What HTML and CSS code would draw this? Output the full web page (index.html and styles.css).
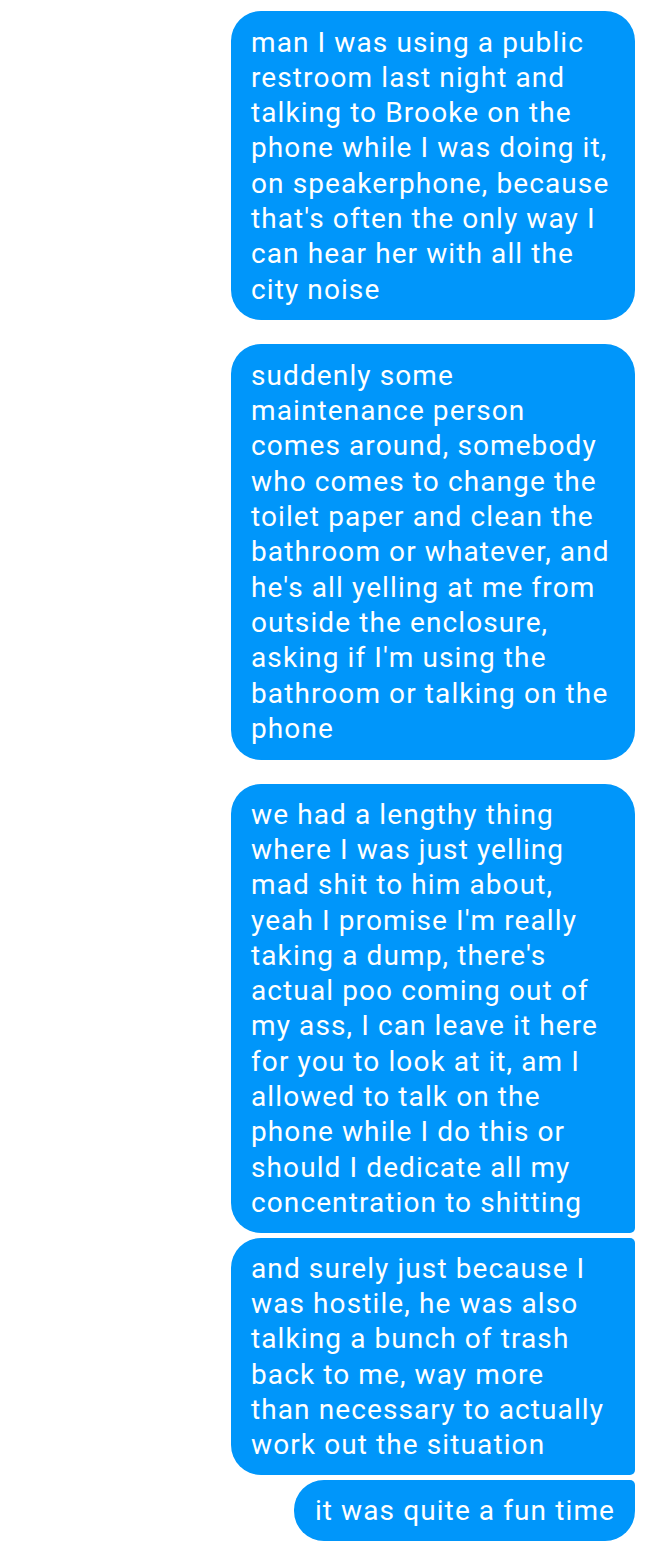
FILE: index.html
```html
<!DOCTYPE html>
<html>
<head>
<meta charset="utf-8">
<link rel="stylesheet" href="styles.css">
</head>
<body>
<div class="thread">
  <div class="bubble solo">man I was using a public<br>restroom last night and<br>talking to Brooke on the<br>phone while I was doing it,<br>on speakerphone, because<br>that's often the only way I<br>can hear her with all the<br>city noise</div>
  <div class="bubble solo">suddenly some<br>maintenance person<br>comes around, somebody<br>who comes to change the<br>toilet paper and clean the<br>bathroom or whatever, and<br>he's all yelling at me from<br>outside the enclosure,<br>asking if I'm using the<br>bathroom or talking on the<br>phone</div>
  <div class="group">
    <div class="bubble first">we had a lengthy thing<br>where I was just yelling<br>mad shit to him about,<br>yeah I promise I'm really<br>taking a dump, there's<br>actual poo coming out of<br>my ass, I can leave it here<br>for you to look at it, am I<br>allowed to talk on the<br>phone while I do this or<br>should I dedicate all my<br>concentration to shitting</div>
    <div class="bubble middle">and surely just because I<br>was hostile, he was also<br>talking a bunch of trash<br>back to me, way more<br>than necessary to actually<br>work out the situation</div>
    <div class="bubble last short">it was quite a fun time</div>
  </div>
</div>
</body>
</html>
```

FILE: styles.css
```css
html, body {
  margin: 0;
  padding: 0;
  background: #ffffff;
}
.thread {
  display: flex;
  flex-direction: column;
  align-items: flex-end;
  gap: 24px;
  padding: 11px 13px 0 0;
  font-family: Roboto, "Noto Sans", sans-serif;
}
.group {
  display: flex;
  flex-direction: column;
  align-items: flex-end;
  gap: 4.5px;
}
.bubble {
  box-sizing: border-box;
  width: 404px;
  background: #0096fa;
  color: #ffffff;
  font-size: 28px;
  line-height: 35.3px;
  letter-spacing: 1.1px;
  padding: 13.5px 20px;
  border-radius: 30px;
  white-space: nowrap;
}
.bubble.first {
  border-radius: 30px 30px 5px 30px;
  padding-top: 13px;
  padding-bottom: 13px;
}
.bubble.middle {
  border-radius: 30px 5px 5px 30px;
  padding-top: 13px;
  padding-bottom: 13px;
}
.bubble.last {
  border-radius: 30px 5px 30px 30px;
  padding-top: 13px;
  padding-bottom: 13px;
}
.bubble.short {
  width: auto;
  padding-left: 21px;
  padding-right: 20px;
}
```
